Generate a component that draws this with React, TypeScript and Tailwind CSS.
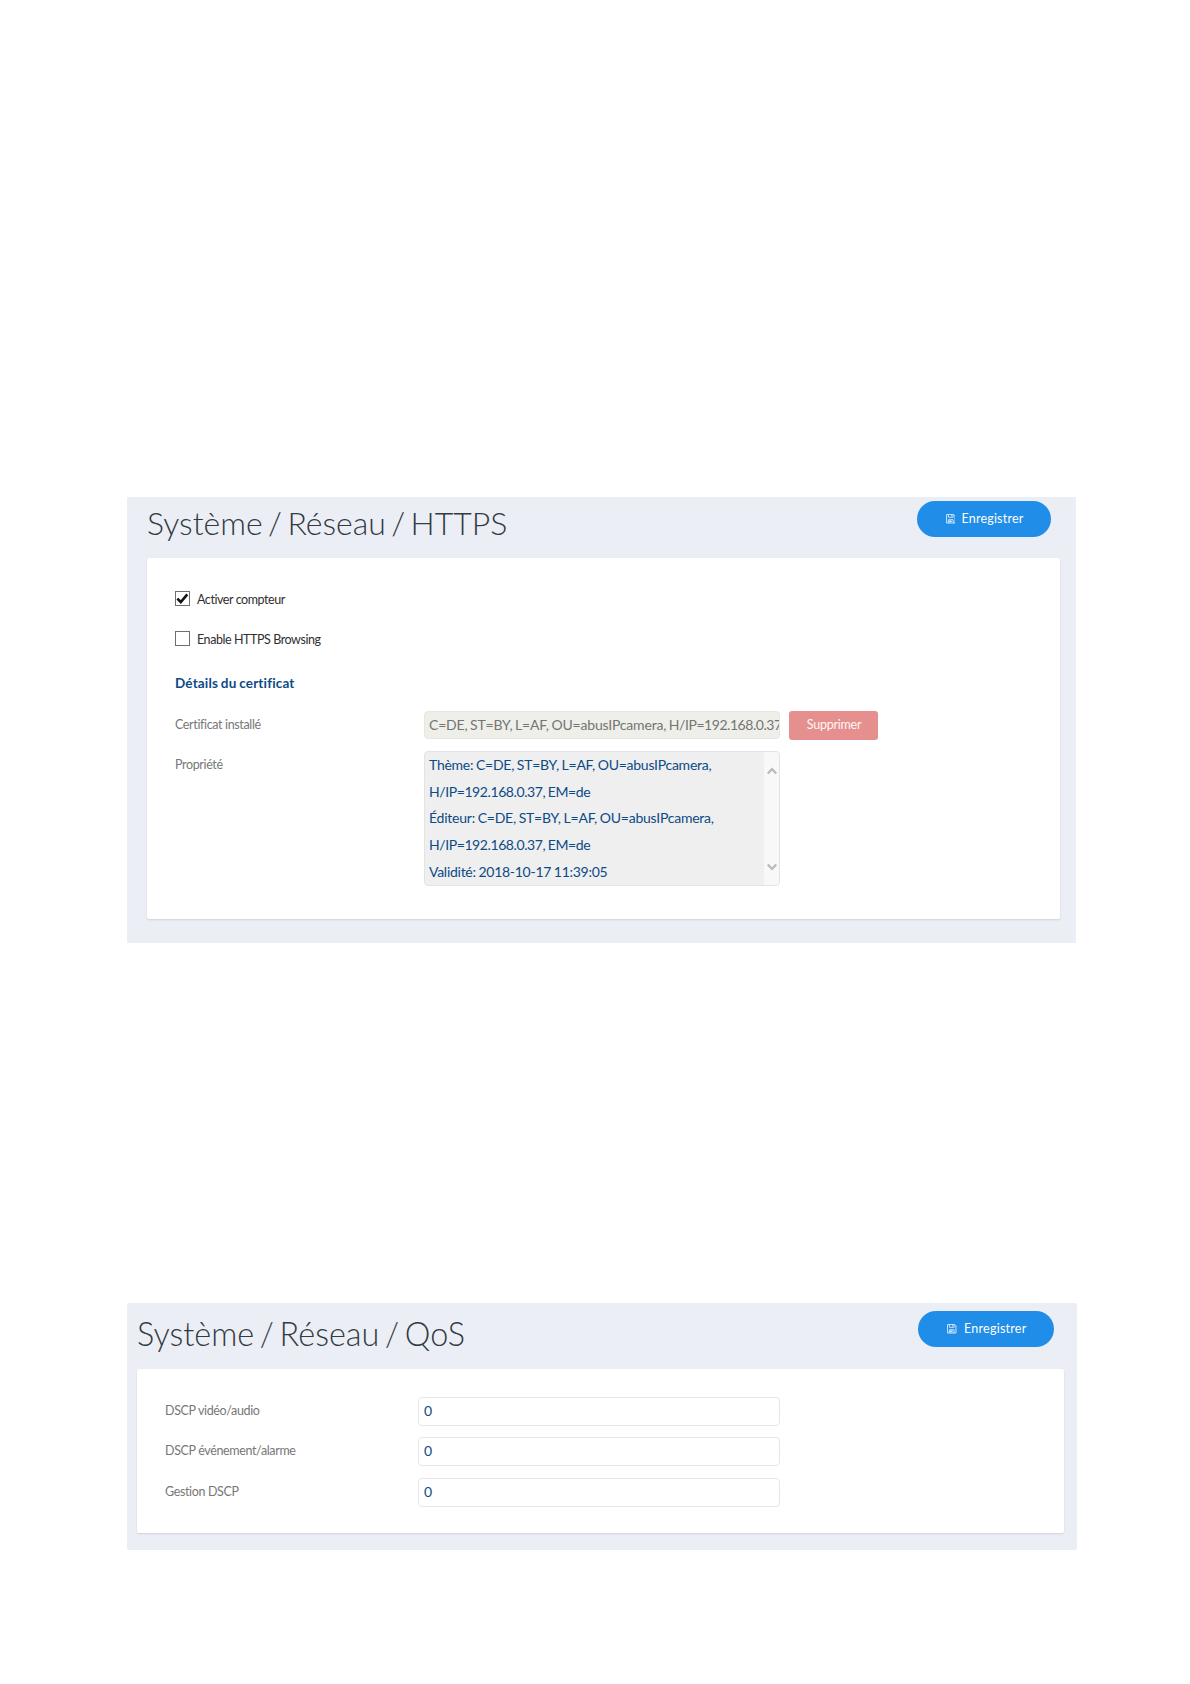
import type { ReactNode } from "react";

function SaveIcon() {
  return (
    <svg viewBox="0 0 10 10" className="h-[9.5px] w-[9.5px] shrink-0" fill="none" stroke="#d0e7fc" strokeWidth="1">
      <path d="M0.5 0.5h7.5l1.5 1.5v7.5h-9z" />
      <path d="M2.5 0.5v3h5v-3M6 1v1.6" />
      <path d="M2.5 9.5v-3.5h5v3.5" />
      <path d="M3 7.8h3" strokeWidth="2" />
    </svg>
  );
}

function SaveButton({ className, labelClassName }: { className: string; labelClassName: string }) {
  return (
    <button
      className={`flex h-9 shrink-0 items-center rounded-full bg-[#208de8] text-[12.5px] leading-4 whitespace-nowrap text-white ${className}`}
    >
      <SaveIcon />
      <span className={labelClassName}>Enregistrer</span>
    </button>
  );
}

function Title({ children, className }: { children: ReactNode; className: string }) {
  return (
    <h1 className={`leading-10 font-light whitespace-nowrap text-[#333a42] ${className}`}>{children}</h1>
  );
}

function Checkbox({ label, checked = false }: { label: string; checked?: boolean }) {
  return (
    <label className="flex h-[15px] items-center text-[12.5px] leading-[15px] tracking-[-0.43px] whitespace-nowrap text-[#303030]">
      <span className="mr-[7px] flex h-[15px] w-[15px] items-center justify-center border border-[#6e6e6e] bg-white">
        {checked && (
          <svg viewBox="0 0 13 13" className="h-[13px] w-[13px]" fill="none" stroke="#111" strokeWidth="2.6">
            <path d="M1.3 6.6 4.8 10 11.3 2.4" />
          </svg>
        )}
      </span>
      <span className="mt-[2px]">{label}</span>
    </label>
  );
}

function FieldLabel({ children, className }: { children: ReactNode; className: string }) {
  return (
    <span
      className={`text-[12.5px] leading-4 tracking-[-0.36px] whitespace-nowrap text-[#777] ${className}`}
    >
      {children}
    </span>
  );
}

function QosRow({ label, className }: { label: string; className: string }) {
  return (
    <div className={`flex h-[29px] ${className}`}>
      <FieldLabel className="mt-[6px] w-[253px]">{label}</FieldLabel>
      <div className="h-[29px] w-[362px] rounded border border-[#e4e6e7] bg-white pl-[5px] text-[14px] leading-[26px] text-[#0c4a86]">
        0
      </div>
    </div>
  );
}

const certificate = [
  { text: "Thème: C=DE, ST=BY, L=AF, OU=abusIPcamera,", tracking: "tracking-[-0.25px]" },
  { text: "H/IP=192.168.0.37, EM=de", tracking: "tracking-[-0.41px]" },
  { text: "Éditeur: C=DE, ST=BY, L=AF, OU=abusIPcamera,", tracking: "tracking-[-0.23px]" },
  { text: "H/IP=192.168.0.37, EM=de", tracking: "tracking-[-0.41px]" },
  { text: "Validité: 2018-10-17 11:39:05", tracking: "tracking-[-0.27px]" },
];

export default function App() {
  return (
    <main className="h-[1684px] w-[1190px] bg-white pt-[497px] pl-[127px] font-['Lato',sans-serif] [font-variant-ligatures:none]">
      <section className="h-[446px] w-[949px] bg-[#ebeff5] pt-1 pl-5">
        <header className="flex h-[57px] items-start">
          <Title className="mt-[2px] w-[770px] text-[32px] [word-spacing:-3.3px]">Système / Réseau / HTTPS</Title>
          <SaveButton className="w-[134px] pl-[28.5px]" labelClassName="ml-[6.5px] tracking-[0.2px]" />
        </header>
        <div className="h-[361px] w-[913px] rounded-[2px] bg-white pt-[33px] pl-7 shadow-[0_1px_2px_rgba(0,0,0,0.12)]">
          <Checkbox label="Activer compteur" checked />
          <div className="h-[25px]" />
          <Checkbox label="Enable HTTPS Browsing" />
          <h2 className="mt-[29px] h-4 text-[13.5px] leading-4 font-bold tracking-[0.17px] text-[#0c4a86] [word-spacing:-0.7px]">
            Détails du certificat
          </h2>
          <div className="mt-5 flex items-start">
            <FieldLabel className="mt-[6px] w-[249px]">Certificat installé</FieldLabel>
            <div className="h-7 w-[356px] overflow-hidden rounded border border-[#e6e7e3] bg-[#efefea] pl-1 text-[14px] leading-[25px] tracking-[-0.18px] whitespace-nowrap text-[#747474] [word-spacing:-0.8px]">
              C=DE, ST=BY, L=AF, OU=abusIPcamera, <span className="tracking-[-0.45px]">H/IP=192.168.0.37</span>
            </div>
            <button className="ml-[9px] h-[29px] w-[89px] rounded-[3px] bg-[#e68f8f] pb-[2px] pl-[1px] text-[12.5px] leading-4 tracking-[-0.25px] text-[#fff6f3]">
              Supprimer
            </button>
          </div>
          <div className="mt-[11px] flex items-start">
            <FieldLabel className="mt-[6px] w-[249px]">Propriété</FieldLabel>
            <div className="flex h-[135px] w-[356px] overflow-hidden rounded border border-[#e2e3e4] bg-[#efefef]">
              <div className="w-[339px] pl-1 text-[14px] leading-[26.7px] whitespace-nowrap text-[#0c4a86] [word-spacing:-0.6px]">
                {certificate.map((line, i) => (
                  <p key={i} className={line.tracking}>
                    {line.text}
                  </p>
                ))}
              </div>
              <div className="flex flex-1 flex-col items-center justify-between bg-[#f8f8f8] pt-[15px] pb-[14px]">
                <svg viewBox="0 0 10 8" className="h-2 w-[10px]" fill="none" stroke="#b9b9b9" strokeWidth="2.2">
                  <path d="M0.8 6.5 5 2l4.2 4.5" />
                </svg>
                <svg viewBox="0 0 10 8" className="h-2 w-[10px]" fill="none" stroke="#b9b9b9" strokeWidth="2.2">
                  <path d="M0.8 1.5 5 6l4.2-4.5" />
                </svg>
              </div>
            </div>
          </div>
        </div>
      </section>

      <section className="mt-[360px] h-[247px] w-[950px] rounded-[2px] bg-[#ebeff5] pt-2 pl-[10px]">
        <header className="flex h-[58px] items-start">
          <Title className="mt-[2px] w-[781px] pt-px text-[32.4px] [word-spacing:-3.1px]">Système / Réseau / QoS</Title>
          <SaveButton className="w-[136px] pl-[29px]" labelClassName="ml-[7.5px] tracking-[0.25px]" />
        </header>
        <div className="h-[164px] w-[927px] rounded-[2px] bg-white pt-7 pl-7 shadow-[0_1px_2px_rgba(0,0,0,0.12)]">
          <QosRow label="DSCP vidéo/audio" className="" />
          <QosRow label="DSCP événement/alarme" className="mt-[11px]" />
          <QosRow label="Gestion DSCP" className="mt-3" />
        </div>
      </section>
    </main>
  );
}
